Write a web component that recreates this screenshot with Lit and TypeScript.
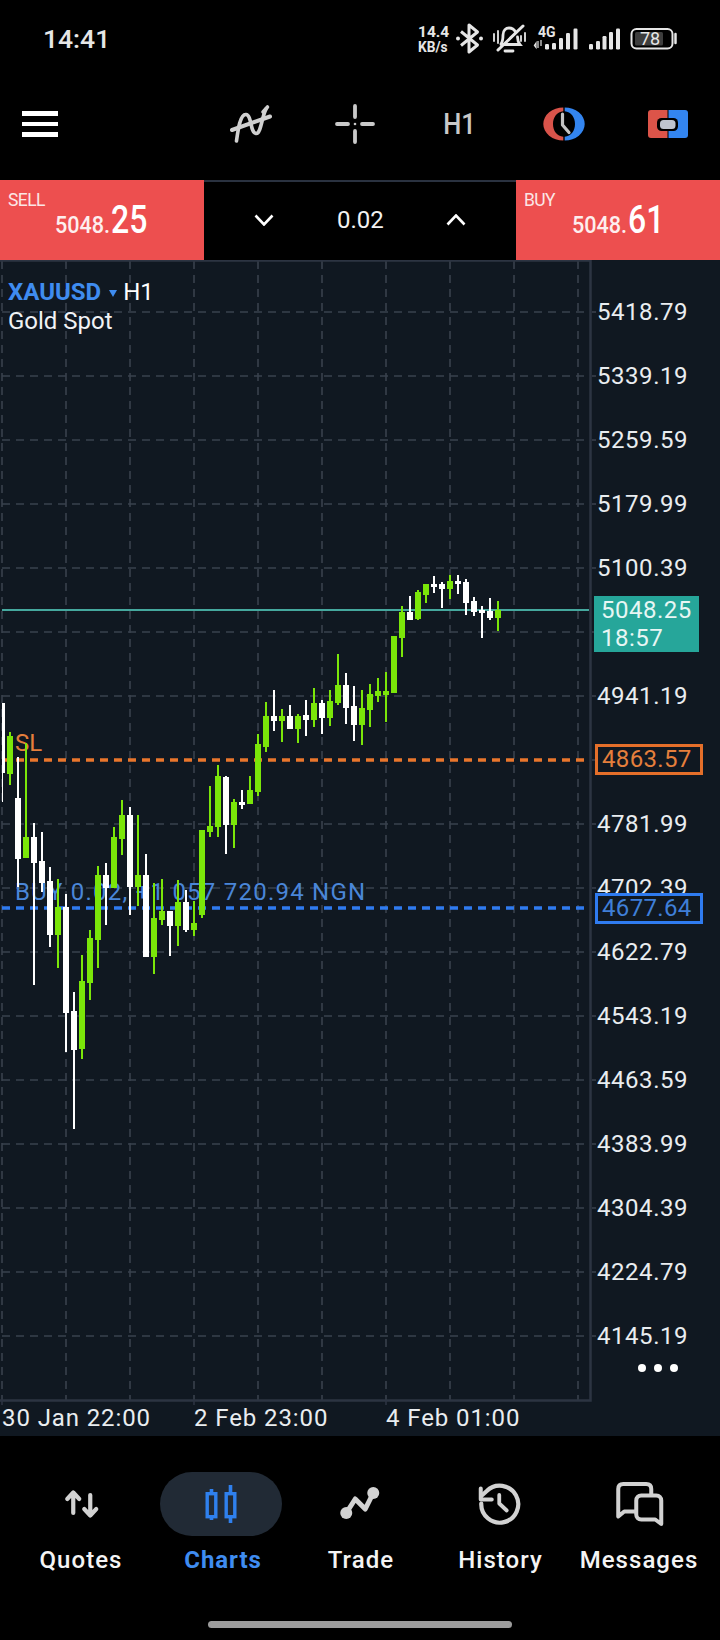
import { LitElement, html, css, svg } from "lit";
import { customElement } from "lit/decorators.js";

// [isGreen, wickTop, bodyTop, bodyBottom, wickBottom] in crop coordinates
const A: number[][] = [
  [0,128,128,338,425],[1,215,228,342,375],[0,290,414,597,680],[1,250,531,594,595],[0,488,531,609,975],
  [0,516,603,669,695],[0,622,663,825,860],[1,657,741,825,924],[0,702,741,1059,1175],[0,996,1053,1170,1407],
  [1,885,963,1167,1197],[1,810,834,969,1020],[1,618,645,840,924],[0,609,645,684,795],[1,501,531,684,684],
  [1,420,465,537,585],[0,441,465,681,765],[1,465,645,681,738],[0,582,645,891,891],[1,669,774,891,942],
  [1,657,753,780,795],[0,753,753,798,888],[1,660,726,798,858],[0,690,726,810,816],[1,723,789,810,828],
  [1,510,510,765,774],[1,378,498,516,531],[1,315,348,501,531],[0,348,351,495,582],[1,417,426,495,564],
  [0,390,426,435,447],[1,348,390,432,432],[1,222,252,396,408],[1,126,168,261,276],[0,90,168,183,213],
  [1,147,168,183,246],[0,135,168,207,207],
];
const B: number[][] = [
  [1,492,498,537,579],[0,450,495,510,558],[1,414,459,510,531],[0,450,459,504,552],[1,420,453,504,528],
  [1,312,405,459,465],[0,369,405,474,522],[0,408,468,525,573],[1,420,474,525,585],[1,402,432,480,531],
  [1,384,423,438,456],[1,366,423,435,516],[1,258,258,429,429],[1,168,186,264,321],[0,138,186,210,210],
  [1,120,126,207,210],[1,102,102,135,159],[0,78,102,111,129],[0,96,102,117,174],[1,75,93,117,147],
  [0,75,93,102,132],[0,87,96,159,195],[0,141,153,186,198],[0,168,180,189,264],[0,144,183,204,210],
  [1,153,180,204,243],
];
const candles = [
  ...A.map(c => [c[0], 660 + c[1] / 3, 660 + c[2] / 3, 660 + c[3] / 3, 660 + c[4] / 3]),
  ...B.map(c => [c[0], 550 + c[1] / 3, 550 + c[2] / 3, 550 + c[3] / 3, 550 + c[4] / 3]),
];
const PRICES: [string, number][] = [
  ["5418.79",312],["5339.19",376],["5259.59",440],["5179.99",504],["5100.39",568],["4941.19",696],
  ["4781.99",824],["4702.39",888],["4622.79",952],["4543.19",1016],["4463.59",1080],["4383.99",1144],
  ["4304.39",1208],["4224.79",1272],["4145.19",1336],
];
const GRID_Y = Array.from({ length: 17 }, (_, i) => 312 + 64 * i);
const GRID_X = Array.from({ length: 10 }, (_, i) => 2 + 64 * i);
const TOP = 260;

@customElement("app-root")
export class AppRoot extends LitElement {
  static styles = css`
    :host { display: block; width: 720px; height: 1640px; background: #000; font-family: Roboto, "Liberation Sans", sans-serif; color: #fff; overflow: hidden; }
    svg { display: block; }
    .status { height: 90px; display: flex; align-items: flex-start; }
    .time { margin: 21px 0 0 43px; font-size: 26.5px; line-height: 36px; font-weight: 500; color: #e6e6e6; }
    .speed { margin: 25px 0 0 auto; width: 34px; text-align: left; font-weight: 700; color: #e6e6e6; }
    .speed div { height: 14px; line-height: 14px; font-size: 15.5px; }
    .speed div + div { font-size: 14px; margin-top: 1px; transform: scaleX(.98); transform-origin: left; }
    .statusicons { width: 228px; height: 40px; margin: 20px 40px 0 0; flex: none; }
    .toolbar { height: 90px; box-sizing: border-box; padding-bottom: 22px; display: flex; align-items: center; }
    .menu { margin-left: 22px; width: 36px; display: flex; flex-direction: column; gap: 6px; }
    .menu i { display: block; height: 4.5px; background: #fff; }
    .tools { margin-left: auto; display: flex; }
    .tool { width: 104.25px; height: 44px; display: flex; align-items: center; justify-content: center; }
    .h1 { font-size: 29px; font-weight: 500; color: #c9c9c9; transform: scaleX(.88); }
    .quote { height: 80px; display: flex; }
    .panel { width: 204px; background: #ed4f4f; padding: 9px 0 0 8px; box-sizing: border-box; }
    .panel .lbl { font-size: 19px; line-height: 22px; letter-spacing: -.6px; color: #fbe6e6; transform: scaleX(.92); transform-origin: left; }
    .panel .px { display: flex; align-items: baseline; margin: -13px 0 0 47px; height: 44px; }
    .panel.buy .px { margin-left: 48px; }
    .small { font-size: 24px; font-weight: 500; width: 56px; transform: scaleX(.9); transform-origin: left; color: #fdeeee; }
    .big { font-size: 39px; font-weight: 500; line-height: 44px; transform: scaleX(.82); transform-origin: left; }
    .lot { flex: 1; box-sizing: border-box; border-top: 2.5px solid #2a3240; display: flex; align-items: center; justify-content: center; gap: 63px; padding: 0 0 2px 0; }
    .lot span { font-size: 24px; width: 46px; text-align: center; color: #f2f2f2; }
    .chart { position: relative; height: 1176px; background: #101821; overflow: hidden; }
    .layer { position: absolute; left: 0; top: 0; }
    .t { position: absolute; font-size: 24px; line-height: 28px; white-space: nowrap; }
    .price { left: 597px; color: #e9edf0; letter-spacing: .55px; }
    .sym { left: 8px; top: 18px; display: flex; align-items: center; }
    .sym b { color: #3f8cf0; font-weight: 700; }
    .sym i { width: 0; height: 0; border-left: 4.5px solid transparent; border-right: 4.5px solid transparent; border-top: 7px solid #3f8cf0; margin: 2px 6px 0 8px; }
    .desc { left: 8px; top: 47px; color: #f1f3f5; }
    .sl { left: 15px; color: #e57f3c; }
    .buyline { left: 15px; color: #4a86d8; letter-spacing: 1.23px; }
    .axis { color: #e9edf0; letter-spacing: .9px; top: 1144px; }
    .teal { position: absolute; left: 594px; top: 336px; width: 105px; height: 56px; background: #26a69a; box-sizing: border-box; padding-left: 7px; font-size: 24px; line-height: 28px; letter-spacing: .5px; color: #e8f6f4; }
    .tag { position: absolute; left: 595px; width: 108px; height: 31px; box-sizing: border-box; border: 3px solid; padding-left: 4px; font-size: 24px; line-height: 25px; letter-spacing: .35px; }
    .tag.o { top: 484px; border-color: #e46f2a; color: #e57f3c; }
    .tag.b { top: 633px; border-color: #2f7bf0; color: #3f7fd8; }
    .dots { position: absolute; left: 638px; top: 1104px; display: flex; gap: 8px; }
    .dots i { width: 8px; height: 8px; border-radius: 50%; background: #fff; }
    .nav { height: 204px; box-sizing: border-box; padding-top: 36px; display: flex; flex-direction: column; align-items: center; }
    .items { display: grid; grid-template-columns: repeat(5, 139.5px); }
    .item { display: flex; flex-direction: column; align-items: center; }
    .ic { width: 122px; height: 64px; border-radius: 32px; display: flex; justify-content: center; }
    .item.on .ic { background: #212a35; }
    .name { margin-top: 10px; font-size: 24px; line-height: 28px; font-weight: 500; letter-spacing: 1.05px; color: #f4f4f4; white-space: nowrap; }
    .name.shift { margin-left: 2px; }
    .item.on .name { color: #3f8cf0; font-weight: 700; letter-spacing: .95px; margin-left: 5px; }
    .home { margin-top: 47px; width: 304px; height: 7px; border-radius: 4px; background: #9c9c9c; }
  `;

  private statusIcons() {
    const c = "#e6e6e6";
    const bars = (xs: number[], tops: number[]) => xs.map((x, i) => svg`<rect x=${x} y=${tops[i]} width="4" height=${49.5 - tops[i]} rx="1.2" fill=${c}/>`);
    return html`<svg class="statusicons" viewBox="452 20 228 40" fill="none">
      <path d="M461 31.5 477.5 45 469 52V25L477.5 32 461 45.5" stroke=${c} stroke-width="3" stroke-linejoin="round"/>
      <circle cx="458" cy="38.5" r="2" fill=${c}/><circle cx="481" cy="38.5" r="2" fill=${c}/>
      <path d="M501 44c2-3 2-6 2-9 0-5 3-7 6-7s5 1 6.5 4M517.5 37c0 3 .5 5 2.5 7.5H501M505 51h8" stroke=${c} stroke-width="2.8" stroke-linecap="round"/>
      <path d="M498 50 523 26" stroke=${c} stroke-width="3" stroke-linecap="round"/>
      <path d="M494 34v7M498 31v12M521 36v5M525 33v8" stroke=${c} stroke-width="1.8" stroke-linecap="round"/>
      <text x="538" y="37" font-family="Roboto, sans-serif" font-size="14" font-weight="700" fill=${c}>4G</text>
      <path d="M538 41v7M536 43l-1.6 2.5 1.6 2zM541 40v6" stroke=${c} stroke-width="1.2"/>
      ${bars([545, 552, 559, 566, 573.5], [44, 43, 38, 33, 28.5])}
      ${bars([589, 596, 602.5, 609, 616], [44, 41, 36, 32, 28.5])}
      <rect x="631.5" y="29" width="41" height="19.5" rx="5" stroke=${c} stroke-width="2"/>
      <rect x="635" y="32" width="28" height="13.5" rx="1.5" fill="#3d3d3d"/>
      <path d="M675.5 34v9" stroke=${c} stroke-width="2.5" stroke-linecap="round"/>
      <text x="640" y="45" font-family="Roboto, sans-serif" font-size="18" fill=${c}>78</text>
    </svg>`;
  }

  private chartBack() {
    const grid = "#39414d";
    return html`<svg class="layer" width="720" height="1176" viewBox="0 ${TOP} 720 1176" fill="none">
      ${GRID_Y.map(y => svg`<path d="M2 ${y}H590" stroke=${grid} stroke-width="1.6" stroke-dasharray="8 6"/><path d="M592 ${y}H596" stroke=${grid} stroke-width="1.6"/>`)}
      ${GRID_X.map(x => svg`<path d="M${x} 261V1400" stroke=${grid} stroke-width="1.6" stroke-dasharray="8 6"/>`)}
      <path d="M2 610H589" stroke="#45a89e" stroke-width="2"/>
      <path d="M2 760H589" stroke="#e9762c" stroke-width="3.5" stroke-dasharray="8 6"/>
      <path d="M2 908H589" stroke="#2f7bf0" stroke-width="3.5" stroke-dasharray="8 6"/>
      <path d="M0 260.5H590.5V1400.5H0" stroke="#2c3442" stroke-width="2.5"/>
      <path d="M2 1400v5M194 1400v5M386 1400v5" stroke="#2c3442" stroke-width="1.6"/>
    </svg>`;
  }

  private candlesSvg() {
    return html`<svg class="layer" width="720" height="1176" viewBox="0 ${TOP} 720 1176" shape-rendering="crispEdges">
      <defs><clipPath id="plot"><rect x="2" y="262" width="587" height="1137"/></clipPath></defs>
      <g clip-path="url(#plot)">
      ${candles.map((c, k) => {
        const x = 2 + 8 * k;
        const fill = c[0] ? "#7be609" : "#ffffff";
        return svg`<rect x=${x - 1} y=${c[1]} width="2" height=${c[4] - c[1]} fill=${fill}/><rect x=${x - 3} y=${c[2]} width="6" height=${c[3] - c[2]} fill=${fill}/>`;
      })}
      </g>
    </svg>`;
  }

  private nav() {
    const g = "#d2d2d2";
    const box = (cx: number, body: unknown) => html`<svg width="64" height="64" viewBox="${cx - 32} 1472 64 64" fill="none">${body}</svg>`;
    return [
      ["Quotes", box(80.75, svg`<path d="M73 1513V1493M67 1499l6-6.5 6 6.5M90 1495V1515M84 1509l6 6.5 6-6.5" stroke=${g} stroke-width="4.2" stroke-linecap="round" stroke-linejoin="round"/>`), false, false],
      ["Charts", box(221, svg`
        <path d="M211.5 1489V1493M211.5 1517V1520M230.5 1485V1493M230.5 1517V1523" stroke="#2f80ed" stroke-width="3.6"/>
        <rect x="207.2" y="1493.7" width="8.6" height="23" stroke="#2f80ed" stroke-width="3.4"/>
        <rect x="226.2" y="1493.7" width="8.6" height="23" stroke="#2f80ed" stroke-width="3.4"/>`), true, false],
      ["Trade", box(359.75, svg`
        <path d="M346 1513 355 1499 365 1509 373 1493" stroke=${g} stroke-width="5" stroke-linejoin="round"/>
        <circle cx="346" cy="1513" r="6" fill=${g}/><circle cx="373" cy="1493" r="6" fill=${g}/>`), false, true],
      ["History", box(499.25, svg`
        <path d="M480.5 1503.5A18.5 18.5 0 1 0 486 1491L480.5 1496" stroke=${g} stroke-width="4.2" stroke-linecap="round"/>
        <path d="M480 1488.5V1499.5H491" stroke=${g} stroke-width="4" stroke-linecap="round" stroke-linejoin="round"/>
        <path d="M498.5 1495V1503.5L506 1510.5" stroke=${g} stroke-width="3.8" stroke-linecap="round" stroke-linejoin="round"/>`), false, true],
      ["Messages", box(638.75, svg`
        <path d="M635 1511.5H624L618 1516.5V1489C618 1485.7 620 1484 623 1484H646C649.5 1484 651 1485.7 651 1489V1495" stroke=${g} stroke-width="4" stroke-linecap="round" stroke-linejoin="round"/>
        <path d="M641 1495.5H656C659 1495.5 661 1497.5 661 1500.5V1524L655 1519.5H641C638 1519.5 636 1517.5 636 1514.5V1500.5C636 1497.5 638 1495.5 641 1495.5Z" stroke=${g} stroke-width="4" stroke-linejoin="round"/>`), false, false],
    ].map(([name, icon, on, shift]) => html`<div class="item ${on ? "on" : ""}"><div class="ic">${icon}</div><div class="name ${shift ? "shift" : ""}">${name}</div></div>`);
  }

  render() {
    return html`
      <div class="status">
        <div class="time">14:41</div>
        <div class="speed"><div>14.4</div><div>KB/s</div></div>
        ${this.statusIcons()}
      </div>
      <div class="toolbar">
        <div class="menu"><i></i><i></i><i></i></div>
        <div class="tools">
          <div class="tool"><svg width="44" height="44" viewBox="229 102 44 44" fill="none" stroke="#cfcfcf" stroke-linecap="round">
            <path d="M232 130 270 116.5" stroke-width="4"/>
            <path d="M236.5 141C238 130 240 114 246 114.5 252 115 250 133 256 133.5 261 134 262 116 266 109" stroke-width="3.6"/>
            <path d="M263 112 267.5 107" stroke-width="3.6"/></svg></div>
          <div class="tool"><svg width="44" height="44" viewBox="334 102 44 44" fill="none" stroke="#c9c9c9" stroke-width="3.8" stroke-linecap="round">
            <path d="M356 106V117M356 131V142M338 124H349M363 124H374"/><circle cx="356" cy="124" r="1.3" fill="#c9c9c9" stroke="none"/></svg></div>
          <div class="tool"><span class="h1">H1</span></div>
          <div class="tool"><svg width="44" height="44" viewBox="542 102 44 44">
            <path d="M563.3 107.5A20 16.5 0 0 0 563.3 140.5V136.8C557 136 553 131 553 124S557 112 563.3 111.2Z" fill="#d9534a"/>
            <path d="M564.7 107.5A20 16.5 0 0 1 564.7 140.5V136.8C571 136 575 131 575 124S571 112 564.7 111.2Z" fill="#3385f0"/>
            <path d="M562.5 114V125L569 132.5" fill="none" stroke="#c4c4c4" stroke-width="3.2" stroke-linecap="round" stroke-linejoin="round"/></svg></div>
          <div class="tool"><svg width="44" height="44" viewBox="646 102 44 44">
            <path d="M651 110H667.5V138H651A3 3 0 0 1 648 135V113A3 3 0 0 1 651 110Z" fill="#dc5449"/>
            <path d="M668.5 110H685A3 3 0 0 1 688 113V135A3 3 0 0 1 685 138H668.5Z" fill="#3385f0"/>
            <rect x="657" y="118" width="21" height="13" rx="4.5" fill="#000"/>
            <rect x="660" y="120" width="15.5" height="9" rx="3.5" fill="#bfc4ce"/></svg></div>
        </div>
      </div>
      <div class="quote">
        <div class="panel"><div class="lbl">SELL</div><div class="px"><span class="small">5048.</span><span class="big">25</span></div></div>
        <div class="lot">
          <svg width="20" height="12" viewBox="0 0 20 12" fill="none"><path d="M1.5 1.5 10 10.5 18.5 1.5" stroke="#fff" stroke-width="2.6"/></svg>
          <span>0.02</span>
          <svg width="20" height="12" viewBox="0 0 20 12" fill="none"><path d="M1.5 10.5 10 1.5 18.5 10.5" stroke="#fff" stroke-width="2.6"/></svg>
        </div>
        <div class="panel buy"><div class="lbl">BUY</div><div class="px"><span class="small">5048.</span><span class="big">61</span></div></div>
      </div>
      <div class="chart">
        ${this.chartBack()}
        <div class="t sym"><b>XAUUSD</b><i></i><span>H1</span></div>
        <div class="t desc">Gold Spot</div>
        <div class="t sl" style="top:${743 - TOP - 14}px">SL</div>
        <div class="t buyline" style="top:${892 - TOP - 14}px">BUY 0.02, +1 057 720.94 NGN</div>
        ${PRICES.map(([p, y]) => html`<div class="t price" style="top:${y - TOP - 14}px">${p}</div>`)}
        ${this.candlesSvg()}
        <div class="teal">5048.25<br>18:57</div>
        <div class="tag o">4863.57</div>
        <div class="tag b">4677.64</div>
        <div class="dots"><i></i><i></i><i></i></div>
        <div class="t axis" style="left:2px">30 Jan 22:00</div>
        <div class="t axis" style="left:194px">2 Feb 23:00</div>
        <div class="t axis" style="left:386px">4 Feb 01:00</div>
      </div>
      <div class="nav">
        <div class="items">${this.nav()}</div>
        <div class="home"></div>
      </div>
    `;
  }
}
